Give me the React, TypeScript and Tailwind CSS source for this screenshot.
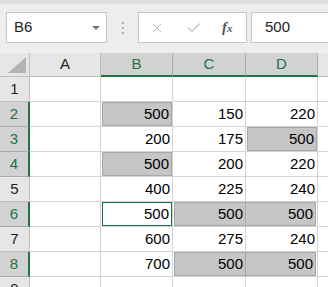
import { Check, X } from "lucide-react";

type Fill = "none" | "full" | "left" | "right" | "active";

type Cell = { v: string; fill: Fill };

type Row = { n: number; sel: boolean; cells: Cell[] };

const c = (v: string, fill: Fill = "none"): Cell => ({ v, fill });

const rows: Row[] = [
  { n: 1, sel: false, cells: [c(""), c(""), c(""), c("")] },
  { n: 2, sel: true, cells: [c(""), c("500", "full"), c("150"), c("220")] },
  { n: 3, sel: true, cells: [c(""), c("200"), c("175"), c("500", "full")] },
  { n: 4, sel: true, cells: [c(""), c("500", "full"), c("200"), c("220")] },
  { n: 5, sel: false, cells: [c(""), c("400"), c("225"), c("240")] },
  { n: 6, sel: true, cells: [c(""), c("500", "active"), c("500", "left"), c("500", "right")] },
  { n: 7, sel: false, cells: [c(""), c("600"), c("275"), c("240")] },
  { n: 8, sel: true, cells: [c(""), c("700"), c("500", "left"), c("500", "right")] },
  { n: 9, sel: false, cells: [c(""), c(""), c(""), c("")] },
];

const colWidths = ["w-[71px]", "w-[72px]", "w-[73px]", "w-[72px]"];
const cols = [
  { name: "A", sel: false },
  { name: "B", sel: true },
  { name: "C", sel: true },
  { name: "D", sel: true },
];

function fillClass(fill: Fill) {
  switch (fill) {
    case "full":
      return "border border-[#a6a6a6] bg-[#c6c6c6]";
    case "left":
      return "border-y border-l border-[#a6a6a6] bg-[#c6c6c6]";
    case "right":
      return "border-y border-r border-[#a6a6a6] bg-[#c6c6c6]";
    case "active":
      return "border border-[#217346] bg-white";
    default:
      return "";
  }
}

export default function App() {
  return (
    <div
      className="w-[328px] h-[287px] overflow-hidden bg-white flex flex-col text-black"
      style={{ fontFamily: '"Liberation Sans", Arial, sans-serif' }}
    >
      {/* Barre de formule */}
      <div className="h-[53px] shrink-0 bg-[#ededed] border-t-4 border-[#dedede] flex items-start pt-[8px] pl-[6px]">
        <div className="w-[101px] h-[31px] bg-white border border-[#c6c6c6] flex items-center justify-between pl-[7px] pr-[6px]">
          <span className="text-[15px] text-[#222]">B6</span>
          <span className="w-0 h-0 border-l-[4px] border-r-[4px] border-t-[4px] border-l-transparent border-r-transparent border-t-[#777]" />
        </div>
        <div className="w-[31px] h-[31px] flex flex-col items-center justify-center gap-[3px]">
          <span className="w-[2px] h-[2px] bg-[#aaa]" />
          <span className="w-[2px] h-[2px] bg-[#aaa]" />
          <span className="w-[2px] h-[2px] bg-[#aaa]" />
        </div>
        <div className="w-[109px] h-[31px] bg-white border border-[#c6c6c6] flex items-center">
          <X className="ml-[10px] w-[16px] h-[16px] text-[#bdbdbd]" strokeWidth={1.5} />
          <Check className="ml-[21px] w-[16px] h-[16px] text-[#bdbdbd]" strokeWidth={1.8} />
          <span
            className="ml-[20px] text-[15px] italic font-bold text-[#555]"
            style={{ fontFamily: '"Liberation Serif", "Times New Roman", serif' }}
          >
            f<span className="text-[11px]">x</span>
          </span>
        </div>
        <div className="ml-[4px] flex-1 h-[31px] bg-white border border-r-0 border-[#c6c6c6] flex items-center pl-[13px]">
          <span className="text-[15px] text-[#222]">500</span>
        </div>
      </div>

      {/* En-têtes de colonnes */}
      <div className="h-[24px] shrink-0 flex bg-[#e6e6e6]">
        <div className="w-[30px] h-full border-r border-b border-[#bfbfbf] relative">
          <span
            className="absolute right-[3px] bottom-[3px] w-0 h-0"
            style={{ borderLeft: "18px solid transparent", borderBottom: "16px solid #b4b4b4" }}
          />
        </div>
        {cols.map((col, i) => (
          <div
            key={col.name}
            className={`${colWidths[i]} h-full flex items-center justify-center text-[15px] border-r ${
              col.sel
                ? "bg-[#d2d2d2] text-[#217346] border-[#ababab] border-b-2 border-b-[#217346]"
                : "text-[#222] border-[#bfbfbf] border-b border-b-[#bfbfbf]"
            }`}
          >
            {col.name}
          </div>
        ))}
        <div className="flex-1 h-full border-b border-[#bfbfbf]" />
      </div>

      {/* Lignes */}
      {rows.map((row) => (
        <div key={row.n} className="h-[25px] shrink-0 flex">
          <div
            className={`w-[30px] h-full flex items-center justify-center text-[15px] border-b ${
              row.sel
                ? "bg-[#d2d2d2] text-[#217346] border-b-[#ababab] border-r-2 border-r-[#217346]"
                : "bg-[#e6e6e6] text-[#222] border-b-[#bfbfbf] border-r border-r-[#bfbfbf]"
            }`}
          >
            {row.n}
          </div>
          {row.cells.map((cell, i) => (
            <div
              key={i}
              className={`${colWidths[i]} h-full border-r border-b border-[#d4d4d4] ${
                cell.fill === "left" ? "border-r-[#a6a6a6]" : ""
              }`}
            >
              <div
                className={`h-full flex items-center justify-end pr-[2px] text-[15px] ${fillClass(cell.fill)} ${
                  cell.fill === "full" || cell.fill === "active" || cell.fill === "left" ? "ml-px" : ""
                } ${cell.fill === "right" ? "mr-px" : ""}`}
              >
                {cell.v}
              </div>
            </div>
          ))}
          <div className="flex-1 h-full border-b border-[#d4d4d4]" />
        </div>
      ))}
    </div>
  );
}
